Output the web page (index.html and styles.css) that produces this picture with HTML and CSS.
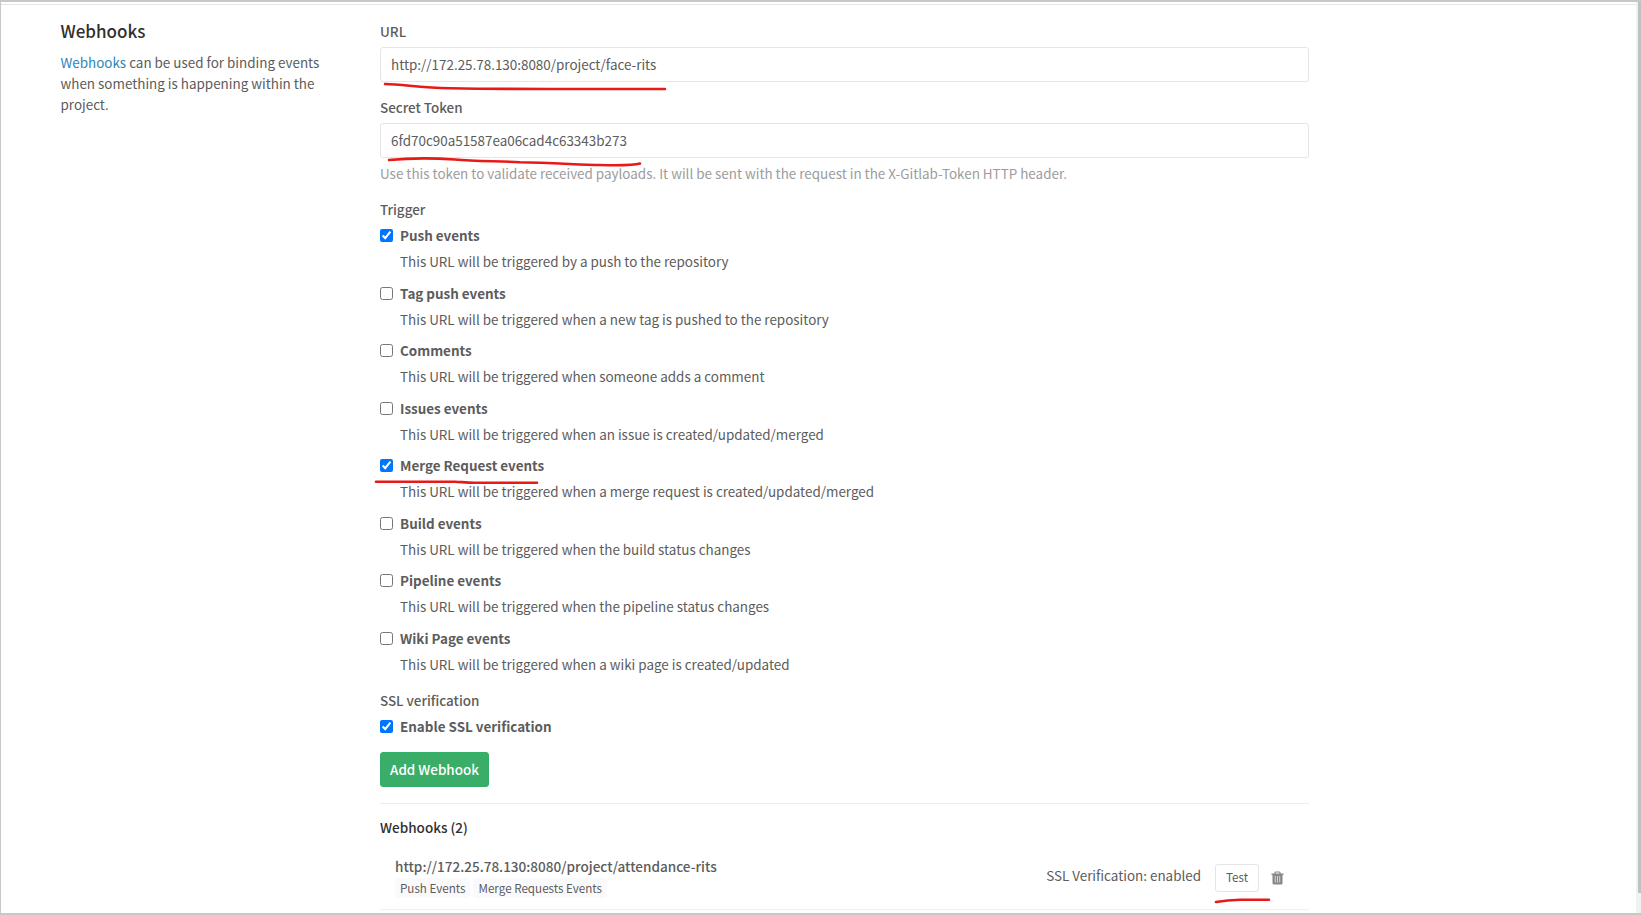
FILE: index.html
```html
<!DOCTYPE html>
<html lang="en">
<head>
  <meta charset="UTF-8" />
  <meta name="viewport" content="width=device-width, initial-scale=1.0">
  <title>Webhooks</title>
  <link rel="stylesheet" href="styles.css">
</head>
<body>
  <div class="page">
    <aside class="sidebar">
      <h4>Webhooks</h4>
      <p><a href="#">Webhooks</a> can be used for binding events when something is happening within the project.</p>
    </aside>

    <main class="content">
      <form>
        <div class="form-group">
          <label class="label" for="url">URL</label>
          <input class="form-control" id="url" type="text" value="http://172.25.78.130:8080/project/face-rits" />
        </div>
        <div class="form-group">
          <label class="label" for="token">Secret Token</label>
          <input class="form-control" id="token" type="text" value="6fd70c90a51587ea06cad4c63343b273" />
          <p class="help">Use this token to validate received payloads. It will be sent with the request in the X-Gitlab-Token HTTP header.</p>
        </div>

        <div class="label">Trigger</div>
        <div class="triggers">
          <div class="trigger">
            <label class="check"><input type="checkbox" checked /><strong>Push events</strong></label>
            <p>This URL will be triggered by a push to the repository</p>
          </div>
          <div class="trigger">
            <label class="check"><input type="checkbox" /><strong>Tag push events</strong></label>
            <p>This URL will be triggered when a new tag is pushed to the repository</p>
          </div>
          <div class="trigger">
            <label class="check"><input type="checkbox" /><strong>Comments</strong></label>
            <p>This URL will be triggered when someone adds a comment</p>
          </div>
          <div class="trigger">
            <label class="check"><input type="checkbox" /><strong>Issues events</strong></label>
            <p>This URL will be triggered when an issue is created/updated/merged</p>
          </div>
          <div class="trigger">
            <label class="check"><input type="checkbox" checked /><strong>Merge Request events</strong></label>
            <p>This URL will be triggered when a merge request is created/updated/merged</p>
          </div>
          <div class="trigger">
            <label class="check"><input type="checkbox" /><strong>Build events</strong></label>
            <p>This URL will be triggered when the build status changes</p>
          </div>
          <div class="trigger">
            <label class="check"><input type="checkbox" /><strong>Pipeline events</strong></label>
            <p>This URL will be triggered when the pipeline status changes</p>
          </div>
          <div class="trigger">
            <label class="check"><input type="checkbox" /><strong>Wiki Page events</strong></label>
            <p>This URL will be triggered when a wiki page is created/updated</p>
          </div>
        </div>

        <div class="label">SSL verification</div>
        <label class="check"><input type="checkbox" checked /><strong>Enable SSL verification</strong></label>
        <button class="btn-create" type="button">Add Webhook</button>
      </form>

      <hr>
      <h5>Webhooks (2)</h5>
      <div class="hook">
        <div class="hook-info">
          <div class="hook-url">http://172.25.78.130:8080/project/attendance-rits</div>
          <div class="badges">
            <span class="badge">Push Events</span>
            <span class="badge">Merge Requests Events</span>
          </div>
        </div>
        <div class="hook-actions">
          <span class="ssl">SSL Verification: enabled</span>
          <button class="btn-test" type="button">Test</button>
          <svg class="trash" width="13" height="14" viewBox="0 0 13 14">
            <path d="M4 3V1.8Q4 1 4.8 1H8.2Q9 1 9 1.8V3" fill="none" stroke="#888" stroke-width="1.2" />
            <path d="M0.5 2.5H12.5V4H11.5V12Q11.5 13.5 10 13.5H3Q1.5 13.5 1.5 12V4H0.5Z" fill="#888" />
            <path d="M4.3 5V11.5M6.5 5V11.5M8.7 5V11.5" stroke="#ddd" stroke-width="0.9" />
          </svg>
        </div>
      </div>
    </main>
  </div>

  <div class="scrollbar"><div class="thumb"></div></div>

  <!-- red marker lines -->
  <svg class="marks" width="1641" height="915" viewBox="0 0 1641 915">
    <path d="M385 84C405 84.5 420 88 450 88.3C490 89 520 89 550 89H665" />
    <path d="M389 160C410 158 440 158.5 455 159.5C475 161.5 500 161 520 162.3C550 163 580 164.5 600 165C620 165.5 635 165 640 163.5" />
    <path d="M376 481.7H455C462 482 466 482.7 475 482.7H537" />
    <path d="M1216 902C1222 901 1230 900 1240 899.8H1269" />
  </svg>
</body>
</html>
```
FILE: styles.css
```css
* {
  box-sizing: border-box;
}
body {
  margin: 0;
  height: 915px;
  overflow: hidden;
  position: relative;
  background-color: #fff;
  color: #5c5c5c;
  font-family: "Noto Sans CJK SC", "Open Sans", sans-serif;
  font-size: 13.43px;
  line-height: 21px;
  border-top: 2px solid #c8c8c8;
  border-left: 1px solid #c8c8c8;
  border-bottom: 2px solid #c8c8c8;
}
h4, h5, p {
  margin: 0;
}
.page {
  display: flex;
  width: 1635px;
  margin-top: 2px;
  padding: 16px 0 0 59.5px;
  border-top: 1px solid #e5e5e5;
}
.sidebar {
  width: 319.5px;
  padding-right: 44px;
}
.sidebar h4 {
  font-size: 17px;
  font-weight: 500;
  line-height: 19px;
  color: #303030;
  margin-bottom: 12px;
}
a {
  color: #3084bb;
  text-decoration: none;
}
.content {
  width: 929px;
}
.form-group {
  margin-bottom: 15px;
}
.label {
  display: block;
  font-weight: 500;
  margin-bottom: 5px;
}
.form-control {
  display: block;
  width: 100%;
  height: 35px;
  padding: 5px 10px 7px;
  border: 1px solid #e5e5e5;
  border-radius: 3px;
  font: inherit;
  color: #5c5c5c;
}
.help {
  margin-top: 5px;
  color: #9c9c9c;
}
.triggers {
  margin-bottom: 4px;
}
.trigger {
  height: 57.57px;
}
.trigger p {
  padding: 5px 0 0 20px;
}
.check {
  display: flex;
}
.check input {
  width: 13px;
  height: 13px;
  margin: 4px 7px 0 0;
}
.btn-create {
  display: block;
  width: 109px;
  height: 35px;
  margin-top: 15px;
  padding: 0;
  border: 1px solid #31af64;
  border-radius: 3px;
  background-color: #3aae68;
  color: #fff;
  font: inherit;
  font-weight: 500;
}
hr {
  margin: 16px 0 13px;
  border: 0;
  border-top: 1px solid #ececec;
}
h5 {
  font-size: 13.5px;
  font-weight: 500;
  color: #303030;
}
.hook {
  display: flex;
  justify-content: space-between;
  height: 72px;
  padding: 18px 25px 0 15px;
  border-bottom: 1px solid #f0f0f0;
}
.hook-url {
  font-size: 13.55px;
  font-weight: 500;
}
.badges {
  display: flex;
  gap: 3px;
  margin-top: 1px;
}
.badge {
  padding: 0 5px;
  border-radius: 3px;
  background-color: #fafafc;
  font-size: 11.64px;
  line-height: 20px;
}
.hook-actions {
  display: flex;
  align-items: flex-start;
  padding-top: 8px;
}
.ssl {
  margin: 1px 14px 0 0;
}
.btn-test {
  width: 44px;
  height: 28px;
  padding: 0 0 2px;
  border: 1px solid #e5e5e5;
  border-radius: 3px;
  background-color: #fff;
  color: #5c5c5c;
  font: inherit;
  font-size: 11.64px;
}
.trash {
  margin: 7px 0 0 12px;
}
.scrollbar {
  position: absolute;
  top: 0;
  right: 0;
  width: 5px;
  height: 911px;
  padding-left: 2px;
  background-color: #f1f1f1;
}
.thumb {
  height: 891px;
  background-color: #c1c1c1;
}
.marks {
  position: absolute;
  top: -2px;
  left: -1px;
  fill: none;
  stroke: #e81919;
  stroke-width: 2.6;
  stroke-linecap: round;
}
```
